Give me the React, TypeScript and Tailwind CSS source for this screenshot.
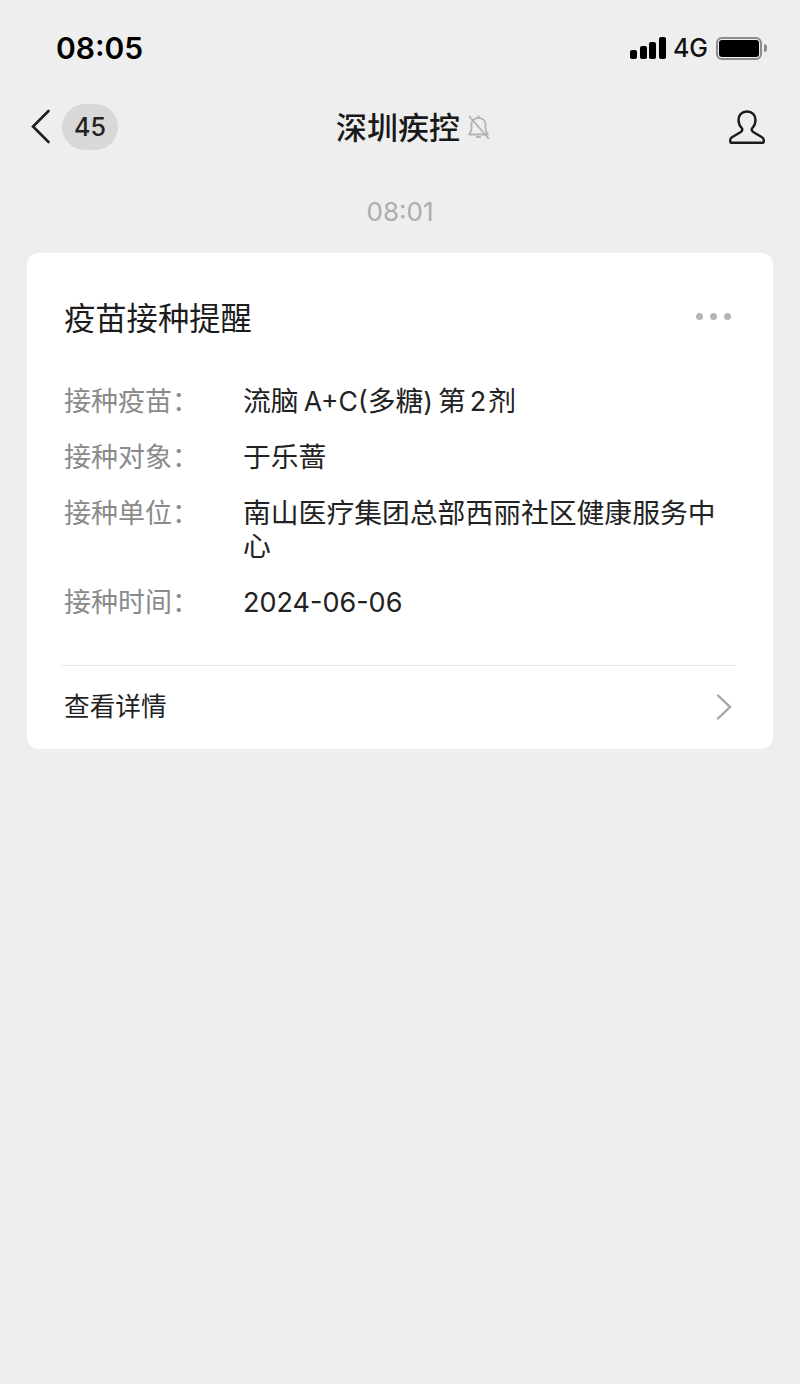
const cjk = "font-['Inter','Noto_Sans_CJK_SC',sans-serif]";

const rows = [
  {
    label: "接种疫苗",
    value: (
      <>
        流脑{"\u2009"}
        <span className="text-[26.500px]">A+C(</span>多糖<span className="text-[26.500px]">)</span>
        {"\u2009"}第<span className="ml-[4px] text-[27px]">2</span>
        <span className="ml-[2px]">剂</span>
      </>
    ),
    className: "h-[56px]",
  },
  { label: "接种对象", value: "于乐蔷", className: "h-[56px]" },
  { label: "接种单位", value: "南山医疗集团总部西丽社区健康服务中心", className: "h-[89px]" },
  { label: "接种时间", value: <span className="text-[27px]">2024-06-06</span>, className: "h-[56px]" },
];

function StatusBar() {
  return (
    <div className="flex h-[96px] items-center justify-between pl-[56px] pr-[33px]">
      <span className="text-[30px] font-semibold leading-none text-black">08:05</span>
      <div className="flex items-center">
        <div className="flex items-end gap-[2.700px]">
          <span className="h-[9px] w-[7px] rounded-[2px] bg-black" />
          <span className="h-[13px] w-[7px] rounded-[2px] bg-black" />
          <span className="h-[17px] w-[7px] rounded-[2px] bg-black" />
          <span className="h-[22px] w-[7px] rounded-[2px] bg-black" />
        </div>
        <span className="ml-[7px] text-[25px] font-medium leading-none text-[#111]">4G</span>
        <div className="ml-[8px] flex items-center">
          <div className="flex h-[23px] w-[46px] items-center rounded-[6px] border-2 border-[#8b8b8b] p-[1px]">
            <div className="h-full w-full rounded-[3px] bg-black" />
          </div>
          <span className="ml-[2px] h-[8px] w-[3px] rounded-r-full bg-[#8b8b8b]" />
        </div>
      </div>
    </div>
  );
}

function BackArrow() {
  return (
    <svg width="20" height="36" viewBox="0 0 20 36" fill="none" stroke="#1f1f1f" strokeWidth="2.600" strokeLinecap="round" strokeLinejoin="miter">
      <path d="M17.500 2 2 17.500 17.500 33" />
    </svg>
  );
}

function MutedBell() {
  return (
    <svg width="26" height="26" viewBox="0 0 26 26" fill="none" stroke="#b3b3b3" strokeWidth="1.800" strokeLinejoin="round">
      <path d="M3 20.500c2-2 2.500-3.500 2.500-6.500V10c0-3.500 3-6 7-6s7 2.500 7 6v4c0 3 .5 4.500 2.500 6.500z" />
      <path d="M12.500 1.500V4M10 23h5M3 2l20 23" />
    </svg>
  );
}

function PersonIcon() {
  return (
    <svg width="36" height="34" viewBox="0 0 36 34" fill="none" stroke="#1a1a1a" strokeWidth="2.400" strokeLinejoin="round">
      <path d="M18 1.500c-5.200 0-8.500 3.700-8.500 8.500 0 3.200 1.300 6 3 7.800.8.900 1 2 .4 3-.5.800-1.300 1.400-2.400 2L3 27.300c-1.200.7-1.800 1.600-1.800 2.900 0 1.500.3 2.600.8 2.600h32c.5 0 .8-1.100.8-2.600 0-1.300-.6-2.200-1.800-2.900L25.500 22.800c-1.100-.6-1.900-1.200-2.400-2-.6-1-.4-2.100.4-3 1.700-1.800 3-4.600 3-7.800 0-4.800-3.300-8.500-8.500-8.500z" />
    </svg>
  );
}

function NavBar() {
  return (
    <div className="relative flex h-[62px] items-center justify-between pl-[31px] pr-[35px]">
      <div className="flex items-center">
        <BackArrow />
        <span className="ml-[11px] flex h-[46px] w-[56px] items-center justify-center rounded-[23px] bg-[#d8d8d8] text-[25px] font-medium leading-none text-[#222]">
          45
        </span>
      </div>
      <div className="absolute left-[336px] top-0 flex h-full items-center gap-[6px]">
        <span className="text-[31px] font-medium leading-none text-[#191919]">深圳疾控</span>
        <MutedBell />
      </div>
      <PersonIcon />
    </div>
  );
}

function NoticeCard() {
  return (
    <div className="mx-[27px] rounded-[12px] bg-white">
      <div className="flex items-center justify-between pl-[37px] pr-[42px] pt-[46px]">
        <h1 className="text-[31.300px] font-normal leading-[40px] text-[#1c1c1c]">疫苗接种提醒</h1>
        <div className="mb-[6px] flex gap-[7px]">
          <span className="h-[7px] w-[7px] rounded-full bg-[#b5b5b5]" />
          <span className="h-[7px] w-[7px] rounded-full bg-[#b5b5b5]" />
          <span className="h-[7px] w-[7px] rounded-full bg-[#b5b5b5]" />
        </div>
      </div>
      <div className="mt-[46px] pl-[37px] pr-[56px]">
        {rows.map((row) => (
          <div key={row.label} className={`flex ${row.className}`}>
            <span className="w-[179px] shrink-0 text-[27px] leading-[34px] text-[#8a8a8a]">{row.label}：</span>
            <span className="text-[27.800px] leading-[33px] text-[#222]">{row.value}</span>
          </div>
        ))}
      </div>
      <div className="ml-[35px] mr-[37px] mt-[23px] h-[1px] bg-[#e9e9e9]" />
      <div className="flex h-[83px] items-center justify-between pb-[2px] pl-[37px] pr-[41px]">
        <span className="text-[25.700px] leading-none text-[#1f1f1f]">查看详情</span>
        <svg width="16" height="26" viewBox="0 0 16 26" fill="none" stroke="#a6a6a6" strokeWidth="2.400" strokeLinecap="round">
          <path d="M2 1.500 14 13 2 24.500" />
        </svg>
      </div>
    </div>
  );
}

export default function App() {
  return (
    <div className={`h-[1384px] w-[800px] overflow-hidden bg-[#eeeeee] ${cjk}`}>
      <StatusBar />
      <NavBar />
      <div className="mt-[38px] h-[57px] text-center text-[26px] leading-[32px] text-[#adadad]">08:01</div>
      <NoticeCard />
    </div>
  );
}
